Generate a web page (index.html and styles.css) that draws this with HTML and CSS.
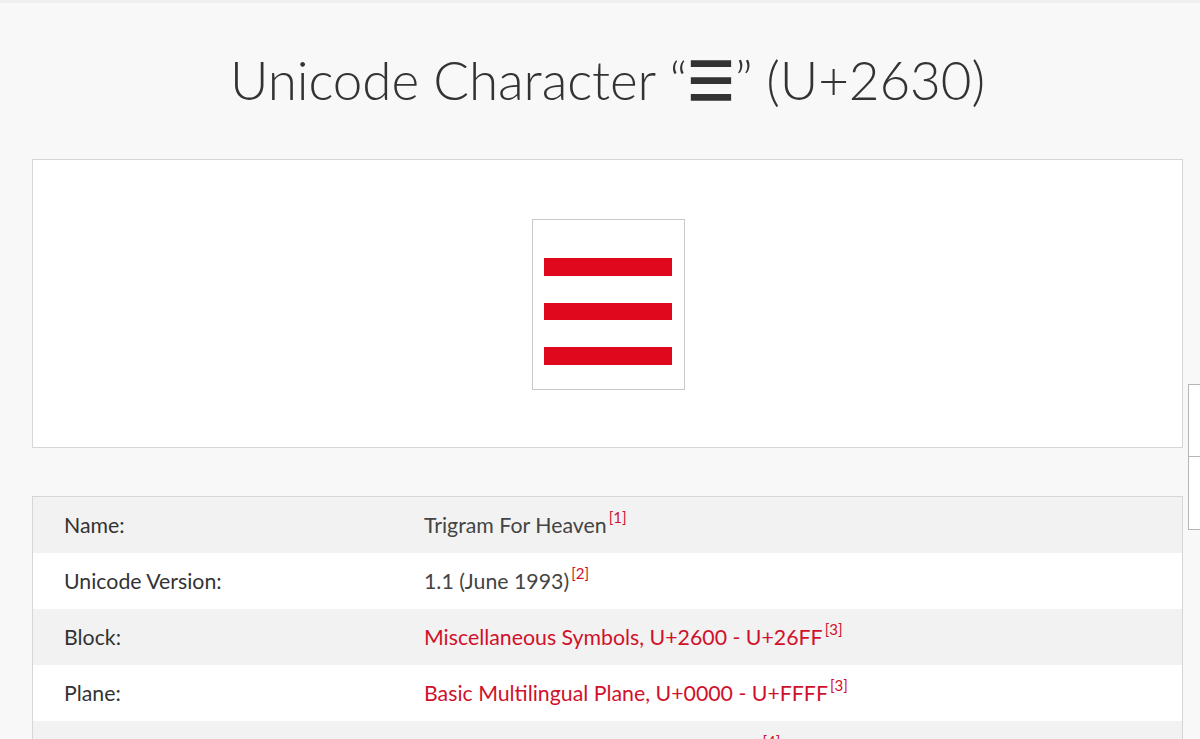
FILE: index.html
```html
<!DOCTYPE html>
<html lang="en">
<head>
<meta charset="utf-8">
<title>Unicode Character “☰” (U+2630)</title>
<link rel="stylesheet" href="styles.css">
</head>
<body>
<div class="page">
  <h1 class="title">Unicode Character “<span class="title-glyph">☰</span>” (U+2630)</h1>
  <div class="preview">
    <div class="glyph-box" aria-label="☰">
      <div class="bar"></div>
      <div class="bar"></div>
      <div class="bar"></div>
    </div>
  </div>
  <div class="info">
    <div class="row alt"><div class="label">Name:</div><div class="value">Trigram For Heaven<sup class="ref">[1]</sup></div></div>
    <div class="row"><div class="label">Unicode Version:</div><div class="value">1.1 (June 1993)<sup class="ref">[2]</sup></div></div>
    <div class="row alt"><div class="label">Block:</div><div class="value"><a class="link" href="#">Miscellaneous Symbols, U+2600 - U+26FF</a><sup class="ref">[3]</sup></div></div>
    <div class="row"><div class="label">Plane:</div><div class="value"><a class="link" href="#">Basic Multilingual Plane, U+0000 - U+FFFF</a><sup class="ref">[3]</sup></div></div>
    <div class="row alt"><div class="label">Script:</div><div class="value"><a class="link" href="#">Code for undetermined script</a> (Zyyy)<sup class="ref">[4]</sup></div></div>
  </div>
</div>
<div class="side-widget">
  <div class="side-cell"></div>
  <div class="side-cell"></div>
</div>
</body>
</html>
```

FILE: styles.css
```css
html, body {
  margin: 0;
  padding: 0;
}
body {
  background: #f8f8f8;
  border-top: 3px solid #efefef;
  font-family: "Source Sans Pro", Lato, "Liberation Sans", sans-serif;
  color: #333;
  overflow: hidden;
  height: 736px;
}
.page {
  width: 1151px;
  margin-left: 32px;
}
.title {
  margin: 0;
  height: 156px;
  box-sizing: border-box;
  padding-top: 42px;
  font-size: 53px;
  line-height: 70px;
  font-weight: 300;
  text-align: center;
  color: #333;
  letter-spacing: -0.1px;
}
.title-glyph {
  font-family: "DejaVu Sans", sans-serif;
  font-weight: bold;
  -webkit-text-stroke: 1.6px #333;
}
.preview {
  background: #fff;
  border: 1px solid #d6d6d6;
  height: 287px;
  display: flex;
  align-items: center;
  justify-content: center;
}
.glyph-box {
  width: 151px;
  height: 169px;
  box-sizing: content-box;
  border: 1px solid #c8c8c8;
  margin-left: 1px;
  margin-top: 2px;
  display: flex;
  flex-direction: column;
  align-items: center;
  justify-content: center;
  gap: 27px;
  background: #fff;
}
.glyph-box .bar:first-child {
  margin-top: 14px;
}
.bar {
  width: 128px;
  height: 17.5px;
  background: #e0081c;
}
.info {
  margin-top: 48px;
  border: 1px solid #d6d6d6;
  border-bottom: none;
  background: #fff;
}
.row {
  display: flex;
  align-items: center;
  height: 56px;
  font-size: 21.3px;
  background: #fff;
}
.row.alt {
  background: #f2f2f2;
}
.label {
  width: 360px;
  padding-left: 31px;
  color: #333;
}
.value {
  color: #444;
}
.link {
  color: #d0112b;
  text-decoration: none;
}
.ref {
  color: #d0112b;
  font-size: 15px;
  vertical-align: 0;
  position: relative;
  top: -10px;
  margin-left: 2px;
}
.side-widget {
  position: absolute;
  left: 1188px;
  top: 384px;
  width: 40px;
  border: 1px solid #b5b5b5;
  background: #fff;
  display: flex;
  flex-direction: column;
}
.side-cell {
  height: 71px;
}
.side-cell + .side-cell {
  border-top: 1px solid #b5b5b5;
  height: 72px;
}
```
